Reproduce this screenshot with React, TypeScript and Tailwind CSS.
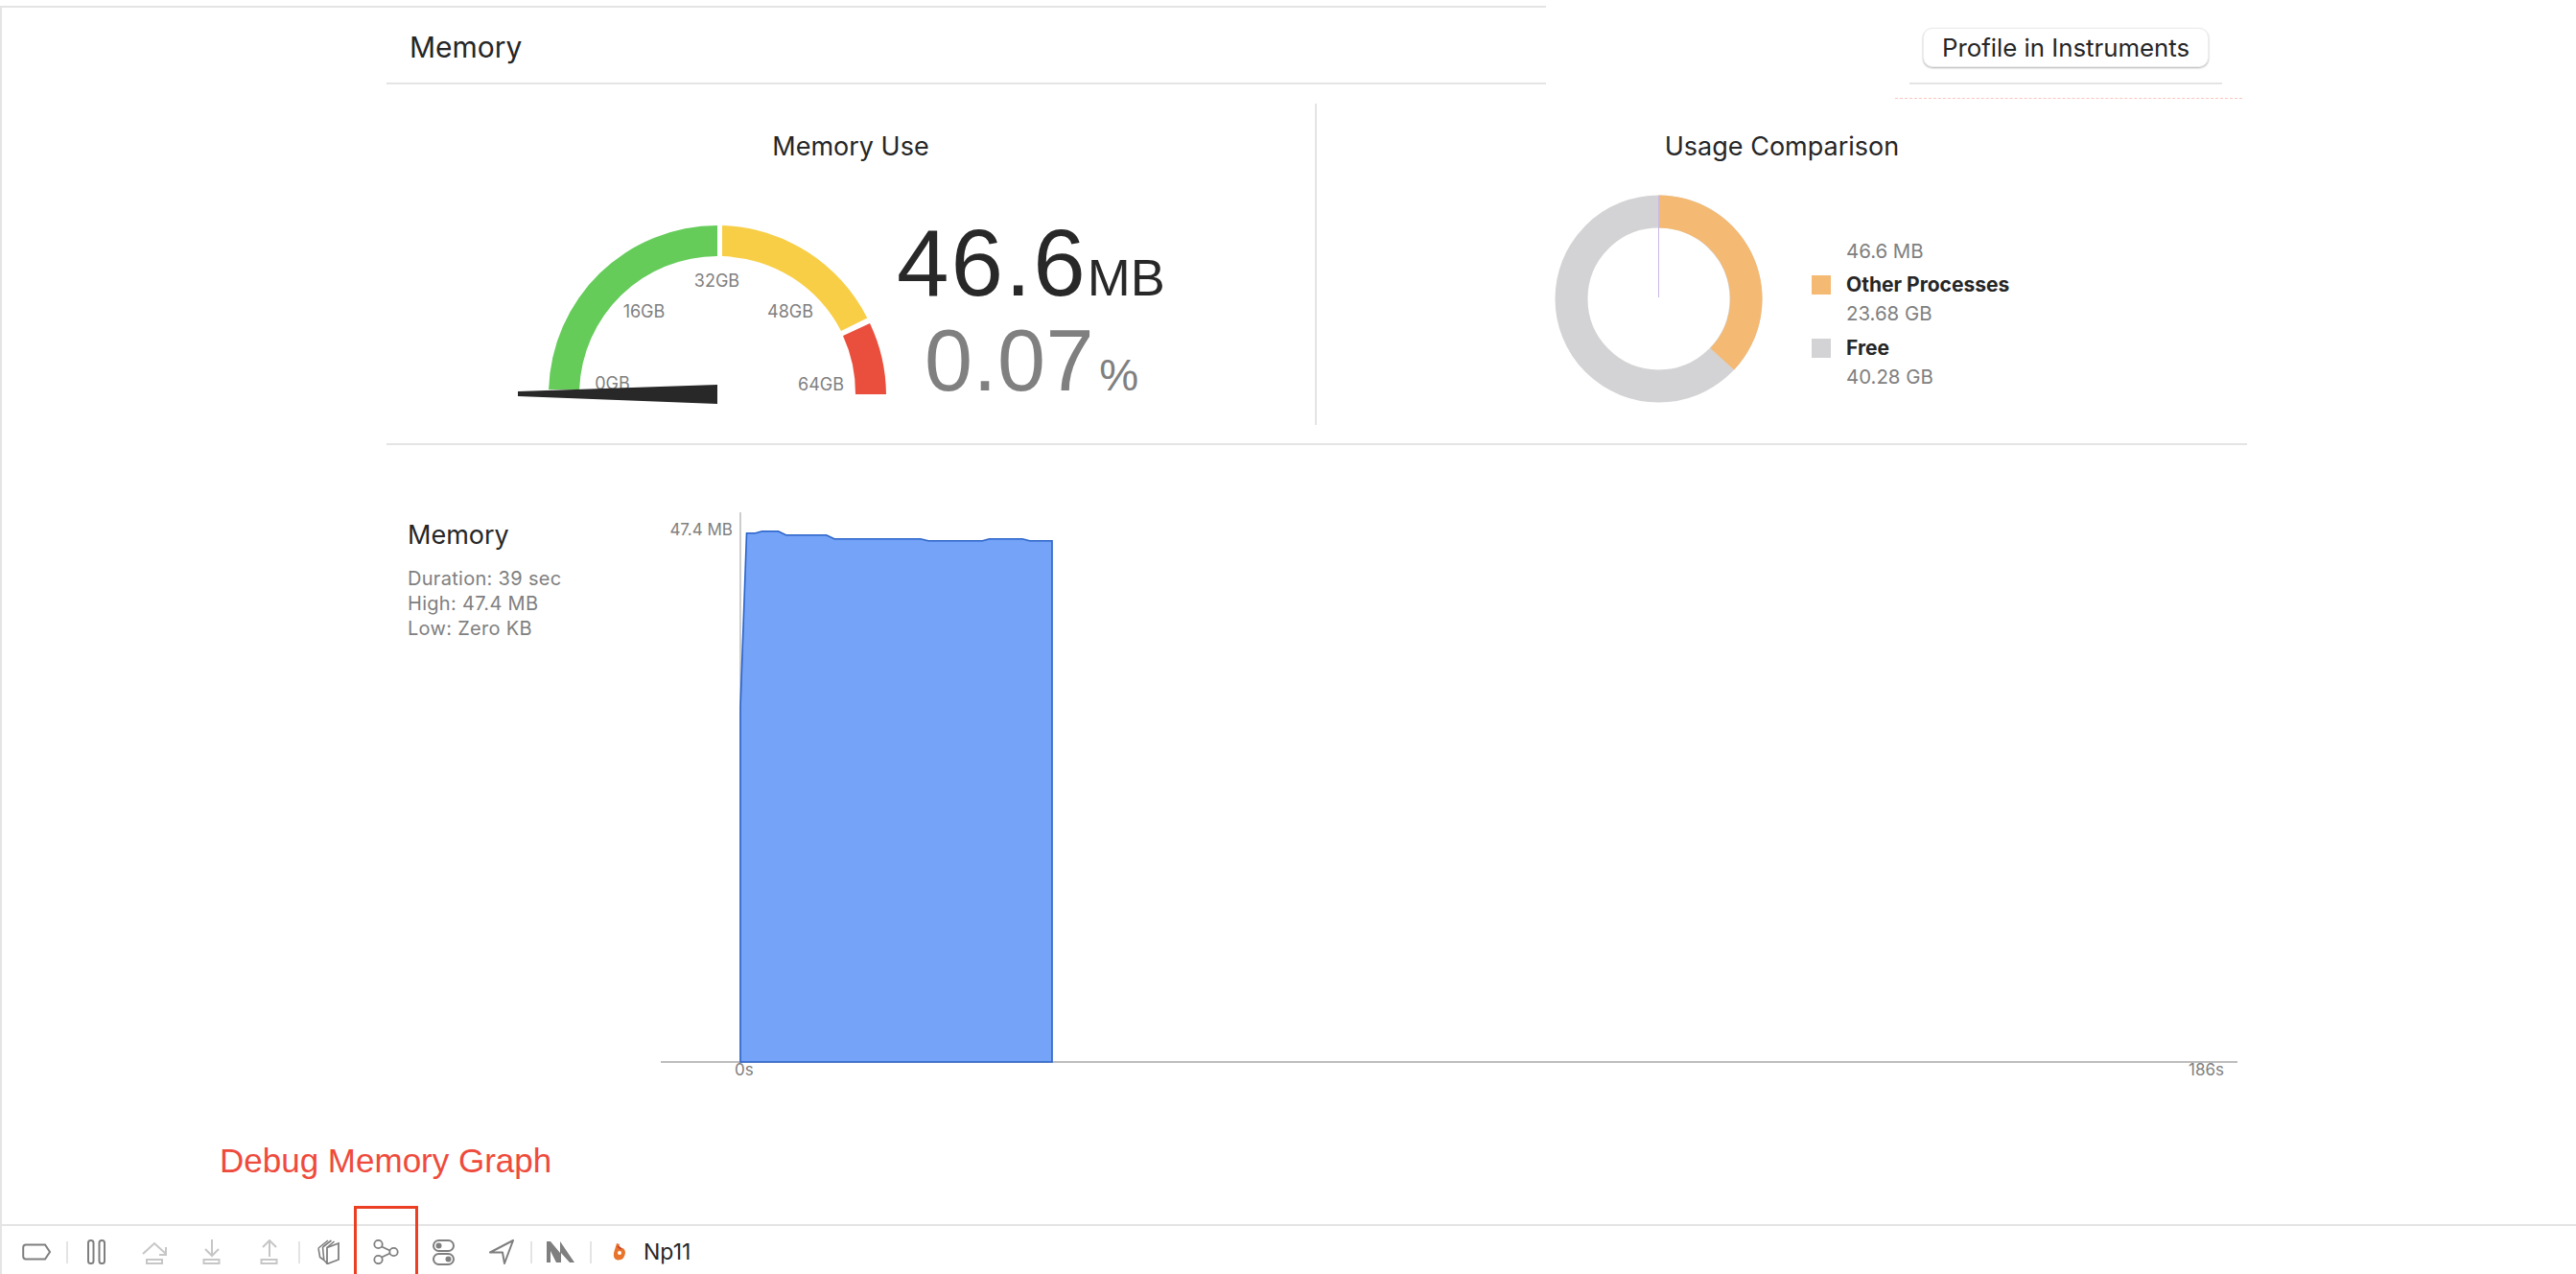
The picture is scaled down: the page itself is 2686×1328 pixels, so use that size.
import React from "react";

const Sep = ({ ml }: { ml: string }) => <div className={`h-[23px] w-[2px] bg-[#e4e4e4] ${ml}`} />;

function Gauge() {
  return (
    <svg width="400" height="200" viewBox="530 225 400 200" className="shrink-0">
      <path d="M572.1 406 A176 176 0 0 1 748 235 L748 267 A144 144 0 0 0 604.1 406 Z" fill="#65cc5a" />
      <path d="M753 235.1 A176 176 0 0 1 904.3 331.5 L877 345 A144 144 0 0 0 753 267.1 Z" fill="#f8ce46" />
      <path d="M907 337 A176 176 0 0 1 924 411 L892 411 A144 144 0 0 0 879 350 Z" fill="#ea4f3d" />
      <g fontFamily="Inter, sans-serif" fontSize="18" fill="#808080" textAnchor="middle">
        <text x="747.5" y="299">32GB</text>
        <text x="671.5" y="331">16GB</text>
        <text x="824" y="331">48GB</text>
        <text x="638.5" y="406">0GB</text>
        <text x="856" y="407">64GB</text>
      </g>
      <path d="M540 408 L748 401 L748 421 L540 413 Z" fill="#282828" />
    </svg>
  );
}

function Donut() {
  return (
    <svg width="220" height="220" viewBox="1620 202 220 220" className="shrink-0">
      <circle cx="1729.5" cy="311.5" r="91" fill="none" stroke="#d3d3d5" strokeWidth="34" />
      <path d="M1729.5 203.5 A108 108 0 0 1 1808.2 385.5 L1783.4 363 A74 74 0 0 0 1729.5 237.5 Z" fill="#f4b973" />
      <path d="M1729.5 204 V310" stroke="#c9b8e8" strokeWidth="1" />
    </svg>
  );
}

function Chart() {
  return (
    <svg width="1660" height="605" viewBox="680 525 1660 605" className="shrink-0">
      <path d="M772 534 V1107" stroke="#bdbdbd" strokeWidth="1.5" />
      <path d="M689 1107 H2333" stroke="#bdbdbd" strokeWidth="2" />
      <path
        d="M772 1107 V737 L778.5 555.7 L787.5 555.7 L794.7 553.7 L811.5 553.7 L819.6 557.7 L861.7 557.7 L870 561.7 L959.8 561.7 L968 563.7 L1024.4 563.7 L1031.6 561.7 L1066 561.7 L1073.7 563.7 L1097 563.7 V1107 Z"
        fill="#74a3f8"
        stroke="#2a63c8"
        strokeWidth="1.6"
      />
      <g fontFamily="Inter, sans-serif" fontSize="17" fill="#808080">
        <text x="764" y="558" textAnchor="end">47.4 MB</text>
        <text x="766" y="1121">0s</text>
        <text x="2319" y="1121" textAnchor="end">186s</text>
      </g>
    </svg>
  );
}

function Toolbar() {
  const g = "#7f7f7f";
  const l = "#c6c6c6";
  return (
    <div className="flex h-[50px] items-center pt-[4px]">
      <svg width="31" height="18" viewBox="0 0 31 18" className="ml-[21px]">
        <path d="M4 1.5 H24 L29 9 L24 16.5 H4 Q1.2 16.5 1.2 13.5 V4.5 Q1.2 1.5 4 1.5 Z" fill="none" stroke={g} strokeWidth="2" />
      </svg>
      <Sep ml="ml-[15px]" />
      <svg width="20" height="26" viewBox="0 0 20 26" className="ml-[20px]">
        <rect x="1" y="1" width="5.5" height="24" rx="2.5" fill="none" stroke={g} strokeWidth="2" />
        <rect x="12.5" y="1" width="5.5" height="24" rx="2.5" fill="none" stroke={g} strokeWidth="2" />
      </svg>
      <svg width="28" height="26" viewBox="0 0 28 26" className="ml-[37px]">
        <path d="M1 15 L13 4 L25 15 M25 8 V16 H18" fill="none" stroke={l} strokeWidth="2" />
        <rect x="5" y="21" width="16" height="4" fill="none" stroke={l} strokeWidth="2" />
      </svg>
      <svg width="20" height="26" viewBox="0 0 20 26" className="ml-[35px]">
        <path d="M10 0 V17 M3 10 L10 17 L17 10" fill="none" stroke={l} strokeWidth="2" />
        <rect x="1.5" y="21" width="16" height="4" fill="none" stroke={l} strokeWidth="2" />
      </svg>
      <svg width="20" height="26" viewBox="0 0 20 26" className="ml-[40px]">
        <path d="M10 18 V1 M3 8 L10 1 L17 8" fill="none" stroke={l} strokeWidth="2" />
        <rect x="1.5" y="21" width="16" height="4" fill="none" stroke={l} strokeWidth="2" />
      </svg>
      <Sep ml="ml-[20px]" />
      <svg width="24" height="26" viewBox="0 0 24 26" className="ml-[18px]">
        <path d="M10 8.5 L22 4 V21 L10 25.5 Z" fill="none" stroke={g} strokeWidth="1.8" />
        <path d="M10 8.5 L17.5 2 M5.5 8 L14.5 1 M5.5 8 L6.8 21.5 L10 25 M1 9 L11 1 M1 9 L2.6 18.5 L6.8 21.5" fill="none" stroke={g} strokeWidth="1.6" />
      </svg>
      <svg width="28" height="26" viewBox="0 0 28 26" className="ml-[34px]">
        <circle cx="5.5" cy="5" r="4.2" fill="none" stroke={g} strokeWidth="1.8" />
        <circle cx="5.5" cy="21" r="4.2" fill="none" stroke={g} strokeWidth="1.8" />
        <circle cx="21.5" cy="13" r="4.2" fill="none" stroke={g} strokeWidth="1.8" />
        <path d="M9 7.5 L17.5 11.5 M9 18.5 L17.5 14.5" stroke={g} strokeWidth="1.8" />
      </svg>
      <svg width="23" height="27" viewBox="0 0 23 27" className="ml-[34px]">
        <rect x="1" y="1" width="21" height="11" rx="5.5" fill="none" stroke={g} strokeWidth="2" />
        <rect x="1" y="15" width="21" height="11" rx="5.5" fill="none" stroke={g} strokeWidth="2" />
        <circle cx="6.5" cy="6.5" r="3" fill={g} />
        <circle cx="16.5" cy="20.5" r="3" fill={g} />
      </svg>
      <svg width="26" height="26" viewBox="0 0 26 26" className="ml-[36px]">
        <path d="M25 1 L1 13.5 L14 13.5 L16 25 Z" fill="none" stroke={g} strokeWidth="2" strokeLinejoin="round" />
      </svg>
      <Sep ml="ml-[17px]" />
      <svg width="30" height="24" viewBox="0 0 30 24" className="ml-[15px]">
        <path d="M0 1 L4 1 L14 13 L14 1 L29 23 L24 23 L15 13 L15 23 L10 23 L4 11 V23 H0 Z" fill={g} />
      </svg>
      <Sep ml="ml-[15px]" />
      <svg width="14" height="18" viewBox="0 0 14 18" className="ml-[22px]">
        <path d="M4 0 L7 1 L6 5 Q13 4 13 10 Q12 18 5 17.5 Q0 17 1 10 Z" fill="#e8742c" />
        <circle cx="7" cy="10" r="2" fill="#fff" />
        <path d="M5 3 L9 6" stroke="#c8432a" strokeWidth="2" />
      </svg>
      <span className="ml-[18px] font-['Inter',sans-serif] text-[23px] text-[#262626]">Np11</span>
    </div>
  );
}

export default function App() {
  return (
    <div className="relative h-[1328px] w-[2686px] overflow-hidden bg-white pt-[6px] font-['Inter',sans-serif]">
      <div className="h-[2px] w-[1612px] bg-[#e4e4e4]" />
      <div className="flex h-[1320px] flex-col border-l-2 border-[#e4e4e4]">
        {/* Header */}
        <div className="flex h-[80px] shrink-0">
          <div className="ml-[401px] flex w-[1209px] items-center border-b-2 border-[#e4e4e4] pl-[24px] pt-[5px]">
            <span className="text-[30px] text-[#262626]">Memory</span>
          </div>
          <div className="ml-[379px] flex w-[326px] justify-center border-b-2 border-[#e4e4e4] pt-[21px]">
            <button className="h-[41px] w-[298px] rounded-[10px] border border-[#ececec] bg-white text-center text-[25.8px] leading-[38px] text-[#262626] shadow-[0_1px_2px_rgba(0,0,0,0.3)]">
              Profile in Instruments
            </button>
          </div>
        </div>
        <div className="ml-[1974px] mt-[14px] h-px w-[362px] border-t border-dashed border-[#fbc4c0]" />
        {/* Stats */}
        <div className="ml-[401px] mt-[5px] flex h-[356px] w-[1940px] shrink-0 border-b-2 border-[#e4e4e4]">
          <div className="h-[335px] w-[970px] border-r-2 border-[#e4e4e4] pt-[27px]">
            <div className="text-center text-[27px] leading-[36px] text-[#262626]">Memory Use</div>
            <div className="ml-[127px] mt-[54px] flex">
              <Gauge />
              <div className="ml-[5px] flex flex-col font-['Liberation_Sans',sans-serif]">
                <div className="mt-[-6px] flex items-baseline leading-[110px] text-[#282828]">
                  <span className="text-[98px] tracking-[2px]">46.6</span>
                  <span className="text-[54px]">MB</span>
                </div>
                <div className="ml-[29px] mt-[-18px] flex items-baseline leading-[100px] text-[#808080]">
                  <span className="text-[90px] tracking-[0.5px]">0.07</span>
                  <span className="ml-[5px] text-[46px]">%</span>
                </div>
              </div>
            </div>
          </div>
          <div className="w-[970px] pt-[27px]">
            <div className="text-center text-[27px] leading-[36px] text-[#262626]">Usage Comparison</div>
            <div className="ml-[247px] mt-[31px] flex">
              <Donut />
              <div className="ml-[49px] mt-[43px] flex flex-col text-[20.4px] leading-[33px]">
                <div className="ml-[36px] text-[#808080]">46.6 MB</div>
                <div className="mt-[2px] flex items-center text-[21px] font-bold text-[#262626]">
                  <span className="mr-[16px] h-[20px] w-[20px] bg-[#f4b973]" />Other Processes
                </div>
                <div className="ml-[36px] mt-[-3px] text-[#808080]">23.68 GB</div>
                <div className="mt-[3px] flex items-center text-[21px] font-bold text-[#262626]">
                  <span className="mr-[16px] h-[20px] w-[20px] bg-[#d3d3d5]" />Free
                </div>
                <div className="ml-[36px] mt-[-3px] text-[#808080]">40.28 GB</div>
              </div>
            </div>
          </div>
        </div>
        {/* Chart */}
        <div className="flex h-[726px] shrink-0">
          <div className="ml-[423px] w-[255px] pt-[76px]">
            <div className="text-[27px] leading-[36px] text-[#262626]">Memory</div>
            <div className="mt-[14px] text-[20px] leading-[26px] tracking-[0.3px] text-[#808080]">
              <div>Duration: 39 sec</div>
              <div>High: 47.4 MB</div>
              <div>Low: Zero KB</div>
            </div>
          </div>
          <div className="pt-[61px]">
            <Chart />
          </div>
        </div>
        <div className="h-[86px] shrink-0 pl-[227px] font-['Liberation_Sans',sans-serif] text-[35px] leading-[40px] text-[#ee4b3c]">
          Debug Memory Graph
        </div>
        <div className="h-[2px] shrink-0 bg-[#e4e4e4]" />
        <Toolbar />
      </div>
      <div className="absolute left-[369px] top-[1257px] h-[90px] w-[67px] border-[3px] border-[#ea3f23]" />
    </div>
  );
}
